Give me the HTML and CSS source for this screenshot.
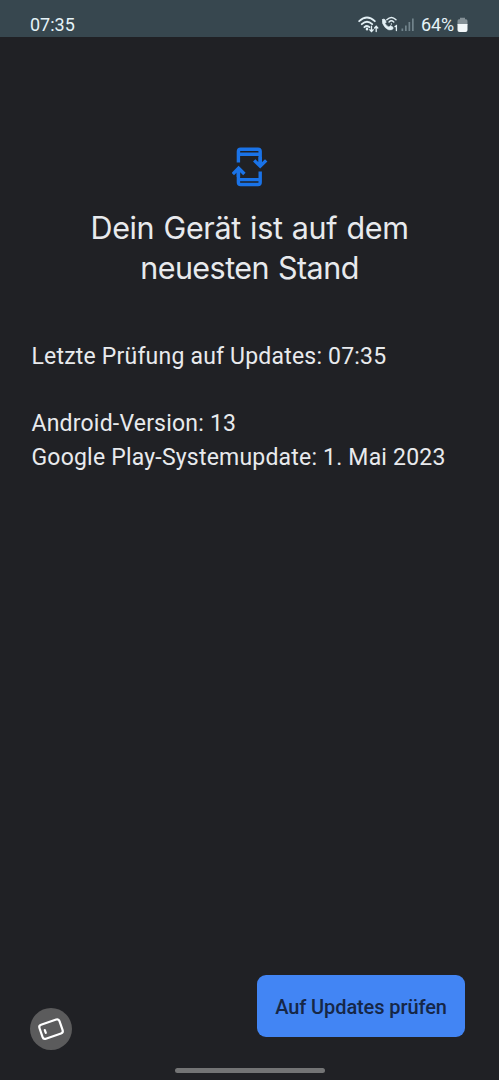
FILE: index.html
```html
<!DOCTYPE html>
<html lang="de">
<head>
<meta charset="utf-8">
<meta name="viewport" content="width=device-width">
<title>Systemupdate</title>
<link rel="stylesheet" href="styles.css">
</head>
<body>
<div class="screen">
  <header class="status">
    <span class="clock">07:35</span>
    <div class="indicators">
      <svg class="wifi" width="22" height="18" viewBox="0 0 22 18" fill="none" stroke="#e3f0f5" stroke-width="1.8" stroke-linecap="round">
        <path d="M1.2 5.2Q9 -2.2 16.8 5.2M3.8 8.2Q9 3.2 14.2 8.2M6.4 11.2Q9 8.8 11.4 11.2"/>
        <path d="M9 12.8v.4" stroke-width="2.4"/>
        <path d="M13.5 10.2v5.2m-1.7-1.7 1.7 1.8 1.7-1.8M18.2 15.5v-5.2m-1.6 1.7 1.6-1.8 1.6 1.8" stroke-width="1.3"/>
      </svg>
      <svg class="call" width="18" height="18" viewBox="0 0 18 18" fill="none" stroke="#e3f0f5" stroke-width="1.4" stroke-linecap="round">
        <path d="M1.5 3.6Q2.8 2.4 4 3.6L5.2 6.2 4 7.4Q5.4 9.8 8 11.1L9.6 9.6 12 11.2Q12.6 12.4 11.2 13.6Q8 15.2 4.2 11.5Q.4 7.4 1.5 3.6Z" fill="#e3f0f5" stroke-width=".6"/>
        <path d="M5.8 3.8Q10.4 -.9 15 3.8M8 6Q10.4 3.6 12.8 6M10.4 7.9v.2"/>
        <path d="M14 10.6 15.4 9.7V14.6" stroke-width="1.3"/>
      </svg>
      <svg class="signal" width="14" height="16" viewBox="0 0 14 16" fill="#71838b">
        <path d="M.5 12.5h1.7V15H.5zM4 9.5h1.7V15H4zM7.5 6h1.7v9H7.5zM11 2.5h1.7V15H11z"/>
      </svg>
      <span class="percent">64%</span>
      <svg class="battery" width="11" height="16" viewBox="0 0 11 16">
        <path d="M3 .8h5v1.4h1Q10.5 2.2 10.5 4v4H.5V4Q.5 2.2 2 2.2h1z" fill="#849096"/>
        <path d="M.5 7h10v6q0 2-2 2h-6q-2 0-2-2z" fill="#f2f7f9"/>
      </svg>
    </div>
  </header>
  <main class="content">
    <svg class="update-icon" width="36" height="40" viewBox="0 0 36 40" fill="none" stroke="#1a73e8" stroke-width="3.4">
      <path d="M6.4 15.5V4.5Q6.4 2.3 8.6 2.3H26Q28.2 2.3 28.2 4.5V15M6.4 7.2H28.2M28.2 24.5V35.3Q28.2 37.5 26 37.5H8.6Q6.4 37.5 6.4 35.3V25M6.4 32.6H28.2"/>
      <path d="M28.2 10V17.5M22.2 13.4 28.2 19.2 34.2 13.4M6.4 30V22M.8 27 6.6 21.2 12.4 27"/>
    </svg>
    <h1 class="title"><span class="line-one">Dein Gerät ist auf dem</span><br><span class="line-two">neuesten Stand</span></h1>
    <p class="checked">Letzte Prüfung auf Updates: 07:35</p>
    <p class="version">Android-Version: 13</p>
    <p class="play">Google Play-Systemupdate: 1. Mai 2023</p>
  </main>
  <footer class="actions">
    <button class="rotate" aria-label="Bildschirm drehen">
      <svg width="42" height="42" viewBox="0 0 42 42" fill="none" stroke="#fff" stroke-width="2.2" stroke-linecap="round">
        <g transform="rotate(-19 21 21)"><rect x="10.4" y="13.7" width="21.2" height="14.8" rx="2.6"/><path d="M14.8 20v3"/></g>
      </svg>
    </button>
    <button class="check">Auf Updates prüfen</button>
  </footer>
  <div class="gesture"></div>
</div>
</body>
</html>
```
FILE: styles.css
```css
* { box-sizing: border-box; }
body { margin: 0; background: #202125; }
.screen {
  width: 499px;
  height: 1080px;
  display: flex;
  flex-direction: column;
  background: #202125;
  color: #e8eaed;
  font-family: Roboto, sans-serif;
  overflow: hidden;
}
.status {
  height: 37px;
  padding: 13px 31px 0 30px;
  display: flex;
  justify-content: space-between;
  align-items: flex-start;
  background: #37474f;
  color: #e5f3f8;
  font-size: 18px;
  line-height: 24px;
}
.indicators { display: flex; align-items: flex-start; }
.wifi { margin: 3px 1px 0 0; }
.call { margin: 3px 2px 0 0; }
.signal { margin: 3px 6px 0 0; }
.percent { letter-spacing: -.1px; }
.battery { margin: 4px 0 0 3px; }
.content {
  flex: 1;
  padding: 110px 31px 0;
}
.update-icon { display: block; margin: 0 auto; }
.title {
  margin: 21px 0 0;
  font-family: Inter, sans-serif;
  font-size: 30.5px;
  line-height: 39.5px;
  font-weight: 375;
  letter-spacing: -.55px;
  word-spacing: 1px;
  text-align: center;
}
.line-one { letter-spacing: -.35px; }
.checked, .version, .play {
  margin: 0;
  padding-left: .5px;
  font-size: 23px;
  line-height: 34px;
  letter-spacing: .2px;
  white-space: nowrap;
}
.checked { margin-top: 53px; }
.version { margin-top: 33px; }
.actions {
  height: 76px;
  padding: 0 34px 0 30px;
  display: flex;
  justify-content: space-between;
}
button {
  padding: 0;
  border: 0;
  font-family: inherit;
}
.rotate {
  width: 42px;
  height: 42px;
  margin-top: 33px;
  border-radius: 50%;
  background: #5b5b5c;
}
.rotate svg { display: block; }
.check {
  width: 208px;
  height: 62px;
  padding-top: 2px;
  border-radius: 9px;
  background: #4285f4;
  color: #162747;
  font-size: 20px;
  font-weight: 500;
  letter-spacing: -.1px;
}
.gesture {
  width: 150px;
  height: 5px;
  margin: 17px auto 7px;
  border-radius: 3px;
  background: #737475;
}
```
